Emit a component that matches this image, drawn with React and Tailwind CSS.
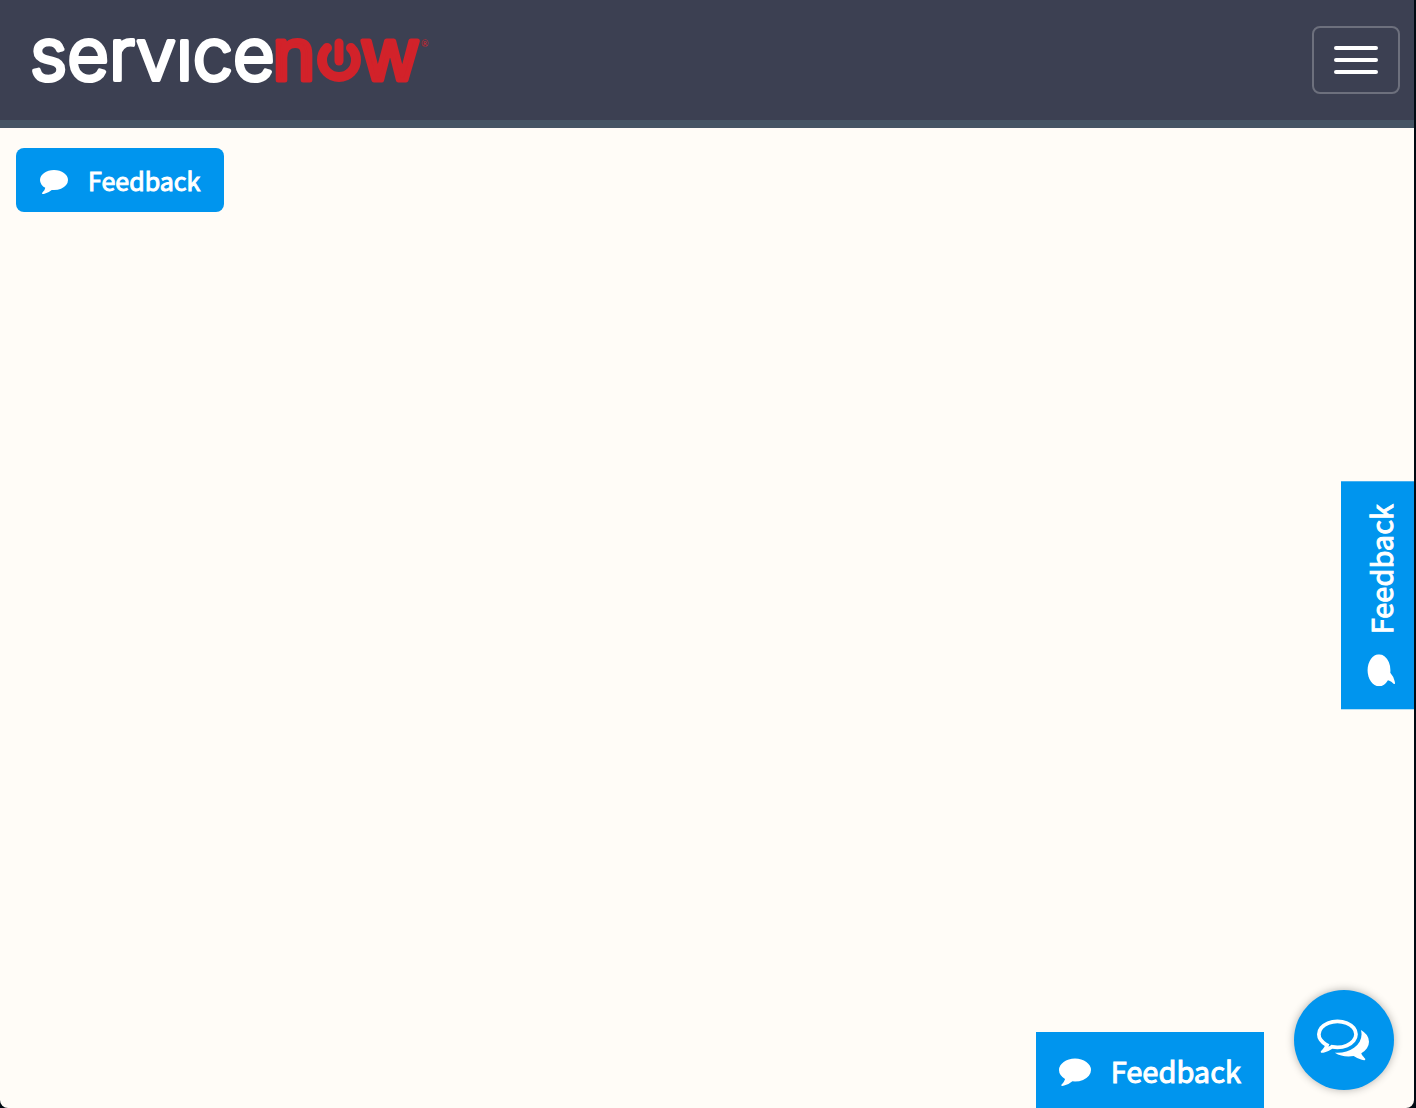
const COMMENT =
  "M1792 896q0 174-120 321.5t-326 233-450 85.5q-70 0-145-8-198 175-460 242-49 14-114 22h-5q-15 0-27-10.5t-16-27.5v-1q-3-4-.5-12t2-10 4.5-9.5l6-9 7-8.5 8-9q7-8 31-34.5t34.5-38 31-39.5 32.5-51 27-59 26-76q-157-89-247.5-220t-90.5-281q0-130 71-248.5t191-204.5 286-136.5 348-50.5 348 50.5 286 136.5 191 204.5 71 248.5z";
const COMMENTS =
  "M704 384q-153 0-286 52t-211.5 141-78.5 191q0 82 53 158t149 132l97 56-35 84q34-20 62-39l44-31 53 10q78 14 153 14 153 0 286-52t211.5-141 78.5-191-78.5-191-211.5-141-286-52zm0-128q191 0 353.5 68.5t256.5 186.5 94 257-94 257-256.5 186.5-353.5 68.5q-86 0-176-16-124 88-278 128-36 9-86 16h-3q-11 0-20.5-8t-11.5-21q-1-3-1-6.5t.5-6.5 2-6l2.5-5 3.5-5.5 4-5 4.5-5 4-4.5q5-6 23-25t26-29.5 22.5-29 25-38.5 20.5-44q-124-72-195-177t-71-224q0-139 94-257t256.5-186.5 353.5-68.5zm822 1169q10 24 20.5 44t25 38.5 22.5 29 26 29.5 23 25q1 1 4 4.5t4.5 5 4 5 3.5 5.5l2.5 5 2 6 .5 6.5-1 6.5q-3 14-13 22t-22 7q-50-7-86-16-154-40-278-128-90 16-176 16-271 0-472-132 58 4 88 4 161 0 309-45t264-129q125-92 192-212t67-254q0-77-23-152 129 71 204 178t75 230q0 120-71 224.5t-195 176.5z";

function Icon({ d, className }) {
  return (
    <svg viewBox="0 0 1792 1792" fill="currentColor" aria-hidden="true" className={className}>
      <path d={d} />
    </svg>
  );
}

function Logo() {
  return (
    <svg viewBox="0 0 400 96" role="img" aria-label="servicenow" className="h-24 w-[400px] overflow-visible">
      <g strokeLinejoin="round">
        <text x="0" y="68" fontSize="72" fill="#fff" stroke="#fff" strokeWidth="4" fontFamily="Inter, sans-serif" fontWeight="300">servıce</text>
        <g fontSize="75" fill="#d2222a" stroke="#d2222a" strokeWidth="5" fontWeight="400" fontFamily="Liberation Sans, sans-serif">
          <text x="243" y="68">n</text>
          <text x="333" y="68">w</text>
        </g>
      </g>
      <g fill="none" stroke="#d2222a" strokeLinecap="round">
        <path d="M297 36A17 17 0 1 0 321 36" strokeWidth="10" />
        <path d="M309 31V49" strokeWidth="9" />
      </g>
      <text x="391" y="35" fill="#d2222a" fontFamily="Lato, sans-serif" fontSize="9">®</text>
    </svg>
  );
}

export default function App() {
  return (
    <div className="min-h-screen bg-[#000a12] pr-0.5 font-['Noto_Sans_CJK_SC',sans-serif] font-normal text-white">
      <div className="relative min-h-screen overflow-hidden rounded-b-lg bg-[#fffcf7]">
        <header className="flex h-32 items-center justify-between border-b-8 border-[#455464] bg-[#3c4052] pr-3.5 pl-[30px]">
          <a href="#home">
            <Logo />
          </a>
          <button
            type="button"
            aria-label="Toggle navigation"
            className="flex h-[68px] w-[88px] flex-col items-center justify-center gap-2 rounded-lg border-2 border-[#6d707d]"
          >
            <span className="h-1 w-11 rounded-xs bg-white" />
            <span className="h-1 w-11 rounded-xs bg-white" />
            <span className="h-1 w-11 rounded-xs bg-white" />
          </button>
        </header>

        <main className="px-4 py-5">
          <button
            type="button"
            className="flex h-16 items-center gap-5 rounded-lg bg-[#0095ee] px-6 text-[25px] leading-8 [-webkit-text-stroke:1px]"
          >
            <Icon d={COMMENT} className="size-7" />
            Feedback
          </button>
        </main>

        <button
          type="button"
          className="absolute top-[481px] right-0 flex w-[73px] rotate-180 items-center gap-5 bg-[#0095ee] pt-[23px] pr-1 pb-[23px] text-[29px] leading-9 [-webkit-text-stroke:1px] [writing-mode:vertical-rl]"
        >
          <Icon d={COMMENT} className="size-8 rotate-90" />
          Feedback
        </button>

        <button
          type="button"
          className="absolute right-[150px] bottom-0 flex h-[76px] items-center gap-5 bg-[#0095ee] px-[23px] text-[29px] leading-9 [-webkit-text-stroke:1px]"
        >
          <Icon d={COMMENT} className="size-8" />
          Feedback
        </button>

        <button
          type="button"
          aria-label="Open chat"
          className="absolute right-5 bottom-[18px] flex size-[100px] items-center justify-center rounded-full bg-[#0095ee] pr-0.5 pb-1 shadow-[0_0_8px_rgba(0,0,0,0.3)]"
        >
          <Icon d={COMMENTS} className="size-[52px]" />
        </button>
      </div>
    </div>
  );
}
